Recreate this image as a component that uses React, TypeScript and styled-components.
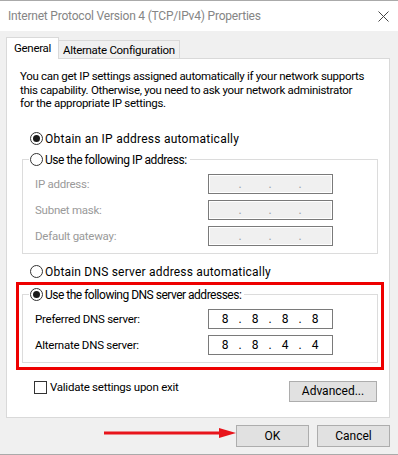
import styled, { createGlobalStyle } from "styled-components";

const FONT = `Roboto, "Liberation Sans", Arial, sans-serif`;

const GlobalStyle = createGlobalStyle`
  html, body {
    margin: 0;
    padding: 0;
    background: #f0f0f0;
    font-family: ${FONT};
    font-size: 11.5px;
    color: #000;
  }
`;

const Window = styled.div`
  box-sizing: border-box;
  width: 398px;
  height: 455px;
  border-top: 1px solid #aaaaaa;
  border-bottom: 1px solid #aaaaaa;
  background: #f0f0f0;
  display: flex;
  flex-direction: column;
`;

const TitleBar = styled.div`
  height: 30px;
  background: #ffffff;
  display: flex;
  align-items: center;
  justify-content: space-between;
  padding: 0 9px 0 8px;
`;

const Title = styled.span`
  color: #858585;
  font-size: 12px;
  letter-spacing: -0.2px;
`;

const Body = styled.div`
  display: flex;
  flex-direction: column;
  padding: 6px 8px 0 6px;
`;

const TabRow = styled.div`
  display: flex;
  align-items: flex-end;
  height: 22px;
  margin-bottom: -1px;
`;

const Tab = styled.div<{ $active?: boolean }>`
  box-sizing: border-box;
  display: flex;
  align-items: center;
  border: 1px solid #d9d9d9;
  border-bottom: none;
  letter-spacing: -0.3px;
  ${(p) =>
    p.$active
      ? `
    height: 22px;
    padding: 0 7px 1px 7px;
    background: #ffffff;
    position: relative;
    z-index: 1;
  `
      : `
    height: 18px;
    margin-bottom: 1px;
    padding: 0 4px 0 4px;
    border-left: none;
    background: #f0f0f0;
  `}
`;

const Panel = styled.div`
  box-sizing: border-box;
  height: 360px;
  background: #ffffff;
  border: 1px solid #d9d9d9;
  padding-top: 11px;
  display: flex;
  flex-direction: column;
`;

const Description = styled.p`
  margin: 0 0 0 13px;
  line-height: 13.5px;
  letter-spacing: -0.3px;
  white-space: nowrap;
`;

const RadioRow = styled.label<{ $top?: number }>`
  display: flex;
  align-items: center;
  gap: 2px;
  height: 16px;
  padding-left: 23px;
  margin-top: ${(p) => p.$top ?? 0}px;
`;

const RadioText = styled.span<{ $spacing: number }>`
  font-size: 12px;
  letter-spacing: ${(p) => p.$spacing}px;
`;

const RadioCircle = styled.span<{ $checked?: boolean }>`
  box-sizing: border-box;
  width: 13px;
  height: 13px;
  border: 1px solid #333333;
  border-radius: 50%;
  background: #ffffff;
  display: flex;
  align-items: center;
  justify-content: center;
  flex: none;
  &::after {
    content: "";
    width: 7px;
    height: 7px;
    border-radius: 50%;
    background: ${(p) => (p.$checked ? "#1a1a1a" : "transparent")};
  }
`;

const Group = styled.fieldset<{ $top?: number; $inset?: boolean }>`
  margin: ${(p) => p.$top ?? 0}px ${(p) => (p.$inset ? 0 : 11)}px 0
    ${(p) => (p.$inset ? 0 : 15)}px;
  border: 1px solid #dcdcdc;
  padding: 6px 0 7px 6px;
  min-width: 0;
  display: flex;
  flex-direction: column;
  gap: 6px;
`;

const Legend = styled.legend`
  padding: 0 3px 0 1px;
  display: flex;
  align-items: center;
  gap: 2px;
  height: 16px;
`;

const FieldRow = styled.div`
  display: grid;
  grid-template-columns: 173px 125px;
  align-items: center;
  padding-left: 6px;
`;

const FieldLabel = styled.span<{ $disabled?: boolean }>`
  letter-spacing: -0.25px;
  color: ${(p) => (p.$disabled ? "#9a9a9a" : "#000000")};
`;

const IpBox = styled.div<{ $disabled?: boolean }>`
  box-sizing: border-box;
  height: 20px;
  border: 1px solid #7a7a7a;
  background: ${(p) => (p.$disabled ? "#f0f0f0" : "#ffffff")};
  box-shadow: ${(p) => (p.$disabled ? "inset 0 0 0 1px #ffffff" : "none")};
  display: flex;
  align-items: center;
  padding-left: 4px;
  font-size: 12px;
`;

const Octet = styled.span`
  width: 24px;
  text-align: center;
`;

const Dot = styled.span<{ $disabled?: boolean }>`
  width: 6px;
  text-align: center;
  color: ${(p) => (p.$disabled ? "#9aa0a6" : "#000000")};
`;

const Highlight = styled.div`
  margin: 2px 5px 0 9px;
  border: 3px solid #ee0000;
  padding: 2px 3px 4px 3px;
`;

const BottomRow = styled.div`
  display: flex;
  justify-content: space-between;
  align-items: flex-start;
  margin: 11px 12px 0 27px;
`;

const CheckRow = styled.label`
  display: flex;
  align-items: center;
  gap: 3px;
  height: 13px;
  letter-spacing: -0.25px;
`;

const CheckBox = styled.span`
  box-sizing: border-box;
  width: 13px;
  height: 13px;
  border: 1px solid #333333;
  background: #ffffff;
  flex: none;
`;

const Button = styled.button<{ $w: number; $h: number }>`
  box-sizing: border-box;
  width: ${(p) => p.$w}px;
  height: ${(p) => p.$h}px;
  background: #e1e1e1;
  border: 1px solid #adadad;
  border-radius: 0;
  padding: 0;
  font-family: ${FONT};
  font-size: 12px;
  color: #000;
`;

const Footer = styled.div`
  display: flex;
  justify-content: flex-end;
  align-items: flex-start;
  margin-top: 7px;
`;

const ArrowSvg = styled.svg`
  display: block;
  flex: none;
`;

const Gap = styled.span`
  width: 8px;
  flex: none;
`;

function Radio({
  checked,
  label,
  spacing = 0,
}: {
  checked?: boolean;
  label: string;
  spacing?: number;
}) {
  return (
    <>
      <RadioCircle $checked={checked} />
      <RadioText $spacing={spacing}>{label}</RadioText>
    </>
  );
}

function IpField({ value, disabled }: { value?: string[]; disabled?: boolean }) {
  const parts = value ?? ["", "", "", ""];
  return (
    <IpBox $disabled={disabled}>
      {parts.map((v, i) => (
        <span key={i} style={{ display: "contents" }}>
          <Octet>{v}</Octet>
          {i < 3 && <Dot $disabled={disabled}>.</Dot>}
        </span>
      ))}
    </IpBox>
  );
}

export default function App() {
  return (
    <>
      <GlobalStyle />
      <Window>
        <TitleBar>
          <Title>Internet Protocol Version 4 (TCP/IPv4) Properties</Title>
          <svg width="11" height="11" viewBox="0 0 11 11">
            <path d="M0.5 0.5 L10.5 10.5 M10.5 0.5 L0.5 10.5" stroke="#444" strokeWidth="1" />
          </svg>
        </TitleBar>
        <Body>
          <TabRow>
            <Tab $active>General</Tab>
            <Tab>Alternate Configuration</Tab>
          </TabRow>
          <Panel>
            <Description>
              You can get IP settings assigned automatically if your network supports
              <br />
              this capability. Otherwise, you need to ask your network administrator
              <br />
              for the appropriate IP settings.
            </Description>

            <RadioRow $top={20}>
              <Radio checked spacing={0.25} label="Obtain an IP address automatically" />
            </RadioRow>

            <Group $top={5}>
              <Legend>
                <Radio spacing={-0.45} label="Use the following IP address:" />
              </Legend>
              <FieldRow>
                <FieldLabel $disabled>IP address:</FieldLabel>
                <IpField disabled />
              </FieldRow>
              <FieldRow>
                <FieldLabel $disabled>Subnet mask:</FieldLabel>
                <IpField disabled />
              </FieldRow>
              <FieldRow>
                <FieldLabel $disabled>Default gateway:</FieldLabel>
                <IpField disabled />
              </FieldRow>
            </Group>

            <RadioRow $top={10}>
              <Radio spacing={0.2} label="Obtain DNS server address automatically" />
            </RadioRow>

            <Highlight>
              <Group $inset>
                <Legend>
                  <Radio
                    checked
                    spacing={-0.5}
                    label="Use the following DNS server addresses:"
                  />
                </Legend>
                <FieldRow>
                  <FieldLabel>Preferred DNS server:</FieldLabel>
                  <IpField value={["8", "8", "8", "8"]} />
                </FieldRow>
                <FieldRow>
                  <FieldLabel>Alternate DNS server:</FieldLabel>
                  <IpField value={["8", "8", "4", "4"]} />
                </FieldRow>
              </Group>
            </Highlight>

            <BottomRow>
              <CheckRow>
                <CheckBox />
                <span>Validate settings upon exit</span>
              </CheckRow>
              <Button $w={88} $h={21}>Advanced...</Button>
            </BottomRow>
          </Panel>
          <Footer>
            <ArrowSvg width="132" height="22" viewBox="0 0 132 22">
              <path d="M0 8 L117 8" stroke="#e8141b" strokeWidth="3" />
              <path d="M115 3 L132 8 L115 13 Z" fill="#e8141b" />
            </ArrowSvg>
            <Button $w={73} $h={22}>OK</Button>
            <Gap />
            <Button $w={73} $h={22}>Cancel</Button>
          </Footer>
        </Body>
      </Window>
    </>
  );
}
